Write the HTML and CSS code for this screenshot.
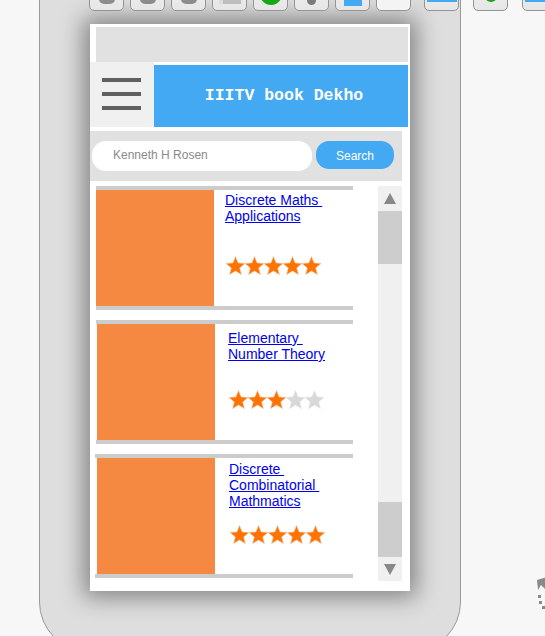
FILE: index.html
```html
<!DOCTYPE html>
<html lang="en">
<head>
<meta charset="UTF-8" />
<meta name="viewport" content="width=device-width, initial-scale=1" />
<title>IIITV book Dekho</title>
<link rel="stylesheet" href="styles.css">
</head>
<body>

<svg class="defs" width="0" height="0">
  <symbol id="star" viewBox="0 0 19 20">
    <polygon points="9.5,0.6 12.1,6.9 19,7.4 13.7,11.9 15.4,18.6 9.5,15 3.6,18.6 5.3,11.9 0,7.4 6.9,6.9" />
  </symbol>
</svg>

<!-- editor toolbar, mostly cut off by the top edge -->
<div class="toolbar">
  <div class="tool-group">
    <div class="tool"><span class="ico ico-blob"></span></div>
    <div class="tool"><span class="ico ico-blob"></span></div>
    <div class="tool"><span class="ico ico-blob"></span></div>
    <div class="tool"><span class="ico ico-square"></span></div>
    <div class="tool"><span class="ico ico-green"></span></div>
    <div class="tool"><span class="ico ico-dot"></span></div>
    <div class="tool"><span class="ico ico-blue"></span></div>
    <div class="tool tool-light"></div>
  </div>
  <div class="tool-group wide">
    <div class="tool"><span class="ico ico-bar"></span></div>
    <div class="tool"><span class="ico ico-green small"></span></div>
    <div class="tool"><span class="ico ico-bar"></span></div>
  </div>
</div>

<div class="panel">
  <div class="phone">
    <div class="status-bar"></div>

    <header class="app-header">
      <div class="menu">
        <span></span><span></span><span></span>
      </div>
      <div class="app-title">IIITV book Dekho</div>
    </header>

    <form class="search">
      <input type="text" placeholder="Kenneth H Rosen" />
      <button type="button" class="search-btn">Search</button>
    </form>

    <div class="list-wrap">
      <div class="book-list">
        <div class="book">
          <div class="cover"></div>
          <div class="info">
            <div class="title"><a href="#">Discrete Maths&nbsp;<br>Applications</a></div>
            <svg class="rating" width="95" height="20">
              <use href="#star" x="0" width="19" height="20" class="on" />
              <use href="#star" x="19" width="19" height="20" class="on" />
              <use href="#star" x="38" width="19" height="20" class="on" />
              <use href="#star" x="57" width="19" height="20" class="on" />
              <use href="#star" x="76" width="19" height="20" class="on" />
            </svg>
          </div>
        </div>
        <div class="book">
          <div class="cover"></div>
          <div class="info">
            <div class="title"><a href="#">Elementary&nbsp;<br>Number Theory</a></div>
            <svg class="rating" width="95" height="20">
              <use href="#star" x="0" width="19" height="20" class="on" />
              <use href="#star" x="19" width="19" height="20" class="on" />
              <use href="#star" x="38" width="19" height="20" class="on" />
              <use href="#star" x="57" width="19" height="20" class="off" />
              <use href="#star" x="76" width="19" height="20" class="off" />
            </svg>
          </div>
        </div>
        <div class="book">
          <div class="cover"></div>
          <div class="info">
            <div class="title"><a href="#">Discrete&nbsp;<br>Combinatorial&nbsp;<br>Mathmatics</a></div>
            <svg class="rating" width="95" height="20">
              <use href="#star" x="0" width="19" height="20" class="on" />
              <use href="#star" x="19" width="19" height="20" class="on" />
              <use href="#star" x="38" width="19" height="20" class="on" />
              <use href="#star" x="57" width="19" height="20" class="on" />
              <use href="#star" x="76" width="19" height="20" class="on" />
            </svg>
          </div>
        </div>
      </div>

      <div class="scrollbar">
        <div class="arrow up"></div>
        <div class="thumb"></div>
        <div class="track"></div>
        <div class="thumb low"></div>
        <div class="arrow down"></div>
      </div>
    </div>
  </div>
</div>

<!-- loading spinner at the right edge -->
<svg class="spinner" width="16" height="40" viewBox="0 0 16 40">
  <polygon points="4,3 14,0 12,4 16,8 12,12 8,8 5,13" fill="#8a8a8a" />
  <rect x="5" y="18" width="3" height="3" fill="#8a8a8a" />
  <rect x="6" y="24" width="3" height="3" fill="#8a8a8a" />
  <rect x="9" y="29" width="3" height="3" fill="#8a8a8a" />
  <rect x="13" y="33" width="3" height="3" fill="#8a8a8a" />
</svg>

</body>
</html>
```

FILE: styles.css
```css
body, html {
  margin: 0; padding: 0;
  height: 636px;
  overflow: hidden;
  background: #f7f7f7;
  font-family: "Liberation Sans", Arial, sans-serif;
}
.defs {
  position: absolute;
}
.toolbar {
  position: absolute;
  top: -22px;
  left: 89px;
  display: flex;
  gap: 13px;
  z-index: 5;
}
.tool-group {
  display: flex;
  gap: 6px;
}
.tool-group.wide {
  gap: 14px;
}
.tool {
  width: 33px;
  height: 31px;
  border: 1px solid #949494;
  border-radius: 5px;
  background: linear-gradient(#f2f2f2, #e6e6e6);
  display: flex;
  justify-content: center;
  align-items: flex-end;
}
.tool-light {
  background: #f4f4f4;
}
.ico {
  display: block;
}
.ico-blob {
  width: 16px; height: 8px;
  margin-bottom: 6px;
  background: #8c8c8c;
  border-radius: 3px 3px 5px 5px;
}
.ico-square {
  width: 18px; height: 14px;
  margin-bottom: 6px;
  background: #bdbdbd;
  border-left: 4px solid #dcdcdc;
}
.ico-green {
  width: 22px; height: 22px;
  margin-bottom: 5px;
  background: #16a814;
  border-radius: 50%;
}
.ico-green.small {
  width: 12px; height: 12px;
  margin-bottom: 8px;
}
.ico-dot {
  width: 9px; height: 9px;
  margin-bottom: 5px;
  background: #7c7c7c;
  border-radius: 50%;
}
.ico-blue {
  width: 18px; height: 18px;
  margin-bottom: 4px;
  background: #42a9f2;
}
.ico-bar {
  width: 30px; height: 10px;
  margin-bottom: 8px;
  background: #42a9f2;
}
.panel {
  margin: -20px 0 0 39px;
  width: 422px;
  height: 672px;
  border: 1px solid #9a9a9a;
  border-radius: 0 0 50px 50px;
  background: #dedede;
  padding: 43px 0 0 50px;
  box-sizing: border-box;
}
.phone {
  width: 320px;
  height: 567px;
  background: #fff;
  box-shadow: 0 0 22px 6px rgba(0,0,0,0.42);
  display: flex;
  flex-direction: column;
}
.status-bar {
  height: 35px;
  margin: 3px 2px 0 6px;
  background: #e1e1e1;
}
.app-header {
  display: flex;
  height: 65px;
  margin-right: 2px;
}
.menu {
  width: 64px;
  background: #f0f0f0;
  display: flex;
  flex-direction: column;
  justify-content: center;
  gap: 10px;
  padding: 0 0 2px 12px;
  box-sizing: border-box;
}
.menu span {
  display: block;
  width: 39px;
  height: 4px;
  background: #606060;
}
.app-title {
  flex: 1;
  margin-top: 3px;
  background: #42a9f2;
  color: #fff;
  font-family: "Liberation Mono", "Courier New", monospace;
  font-weight: bold;
  font-size: 16.5px;
  display: flex;
  align-items: center;
  justify-content: center;
  padding: 0 0 1px 6px;
}
.search {
  margin: 4px 8px 0 0;
  height: 50px;
  background: #e1e1e1;
  display: flex;
  align-items: flex-start;
  padding: 10px 0 0 2px;
  box-sizing: border-box;
  gap: 4px;
}
.search input {
  width: 220px;
  height: 30px;
  border: none;
  border-radius: 14px;
  background: #fff;
  padding: 0 0 3px 21px;
  box-sizing: border-box;
  font-family: "Liberation Sans", Arial, sans-serif;
  font-size: 12px;
  outline: none;
}
.search input::placeholder {
  color: #8a8a8a;
}
.search-btn {
  width: 78px;
  height: 28px;
  border: none;
  border-radius: 13px;
  background: #42a9f2;
  color: #fff;
  font-family: "Liberation Sans", Arial, sans-serif;
  font-size: 12px;
  padding: 1px 0 0;
}
.list-wrap {
  display: flex;
  margin: 5px 8px 0 6px;
  height: 395px;
}
.book-list {
  width: 257px;
  display: flex;
  flex-direction: column;
  gap: 10px;
}
.book {
  display: flex;
  border-top: 4px solid #cccccc;
  border-bottom: 4px solid #cccccc;
  height: 116px;
}
.cover {
  width: 118px;
  background: #f68942;
}
.info {
  padding: 2px 0 0 11px;
  display: flex;
  flex-direction: column;
  align-items: flex-start;
}
.book:nth-child(2) { padding-left: 1px; }
.book:nth-child(2) .info { padding-left: 13px; padding-top: 6px; }
.book:nth-child(2) .title { height: 60px; }
.book:nth-child(3) { padding-left: 2px; margin-left: -1px; }
.book:nth-child(3) .info { padding-left: 14px; padding-top: 3px; }
.title {
  height: 64px;
  font-size: 14px;
  line-height: 16px;
}
.title a {
  color: #0000ee;
}
.rating {
  display: block;
  margin-left: 1px;
}
.rating .on {
  fill: #ff7300;
  stroke: #e7c9b0;
  stroke-width: 0.6;
}
.rating .off {
  fill: #d8d8d8;
  stroke: #e4e4e4;
  stroke-width: 0.6;
}
.scrollbar {
  width: 24px;
  margin-left: auto;
  background: #f0f0f0;
  display: flex;
  flex-direction: column;
}
.arrow {
  height: 25px;
  display: flex;
  justify-content: center;
  align-items: center;
}
.arrow::before {
  content: "";
  border-left: 6px solid transparent;
  border-right: 6px solid transparent;
}
.arrow.up::before {
  border-bottom: 11px solid #888;
}
.arrow.down {
  height: 24px;
}
.arrow.down::before {
  border-top: 11px solid #888;
}
.thumb {
  height: 53px;
  background: #cdcdcd;
}
.thumb.low {
  height: 55px;
}
.track {
  flex: 1;
}
.spinner {
  position: absolute;
  left: 533px;
  top: 577px;
}
```
